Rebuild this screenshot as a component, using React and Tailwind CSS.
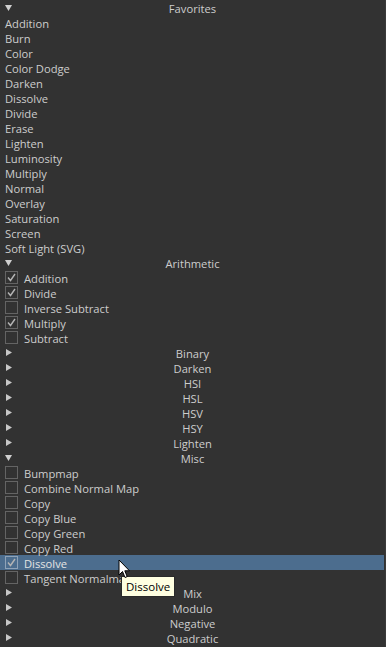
import React from 'react';

const sections = [
  { title: 'Favorites', open: true, items: ['Addition', 'Burn', 'Color', 'Color Dodge', 'Darken', 'Dissolve', 'Divide', 'Erase', 'Lighten', 'Luminosity', 'Multiply', 'Normal', 'Overlay', 'Saturation', 'Screen', 'Soft Light (SVG)'], checks: false },
  { title: 'Arithmetic', open: true, checks: true, items: [['Addition', true], ['Divide', true], ['Inverse Subtract', false], ['Multiply', true], ['Subtract', false]] },
  { title: 'Binary' },
  { title: 'Darken' },
  { title: 'HSI' },
  { title: 'HSL' },
  { title: 'HSV' },
  { title: 'HSY' },
  { title: 'Lighten' },
  { title: 'Misc', open: true, checks: true, items: [['Bumpmap', false], ['Combine Normal Map', false], ['Copy', false], ['Copy Blue', false], ['Copy Green', false], ['Copy Red', false], ['Dissolve', true, true], ['Tangent Normalmap', false]] },
  { title: 'Mix' },
  { title: 'Modulo' },
  { title: 'Negative' },
  { title: 'Quadratic' },
];

const Arrow = ({ open }) => (
  <svg width="8" height="8" viewBox="0 0 8 8" className="absolute left-[5px] top-[4px]">
    {open ? <path d="M0 1 L7 1 L3.5 7 Z" fill="#d0d0d0" /> : <path d="M1 0 L7 3.5 L1 7 Z" fill="#c8c8c8" />}
  </svg>
);

const Check = ({ on, sel }) => (
  <span className={`w-[13px] h-[13px] border flex items-center justify-center shrink-0 ${sel ? 'border-[#8fa3b8]' : 'border-[#646464]'}`}>
    {on && (
      <svg width="11" height="11" viewBox="0 0 11 11">
        <path d="M2 5.5 L4.5 8.5 L9 2" stroke="#b4b4b4" strokeWidth="1.4" fill="none" />
      </svg>
    )}
  </span>
);

export default function App() {
  return (
    <div className="w-[386px] h-[647px] bg-[#323232] text-[#cdcdcd] text-[11.2px] leading-[15px] relative overflow-hidden border-r border-[#3a3a3a]" style={{ fontFamily: '"Open Sans", "Noto Sans", sans-serif' }}>
      {sections.map((s) => (
        <React.Fragment key={s.title}>
          <div className="h-[15px] relative flex items-center justify-center">
            <Arrow open={s.open} />
            <span className="mt-[2px]">{s.title}</span>
          </div>
          {s.open && s.items.map((it) => {
            if (!s.checks) {
              return (
                <div key={it} className="h-[15px] flex items-center pl-[5px]">
                  <span className="mt-[2px]">{it}</span>
                </div>
              );
            }
            const [label, on, sel] = it;
            return (
              <div key={label} className={`h-[15px] flex items-center pl-[5px] gap-[6px] ${sel ? 'bg-[#4c6d8e] mr-[1px]' : ''}`}>
                <Check on={on} sel={sel} />
                <span className={`mt-[2px] ${sel ? 'text-[#e4e4e4]' : ''}`}>{label}</span>
              </div>
            );
          })}
        </React.Fragment>
      ))}

      {/* tooltip */}
      <div className="absolute left-[121px] top-[576px] h-[21px] px-[4px] flex items-center bg-[#ffffe1] border border-[#2a2a2a] text-black text-[11.5px]">
        Dissolve
      </div>

      {/* cursor */}
      <svg width="14" height="21" viewBox="0 0 14 21" className="absolute left-[118px] top-[559px]">
        <path d="M1 1 L1 16 L4.5 12.5 L7 18.5 L9.2 17.6 L6.8 11.8 L11.5 11.8 Z" fill="#ffffff" stroke="#000000" strokeWidth="1" strokeLinejoin="round" />
      </svg>
    </div>
  );
}
